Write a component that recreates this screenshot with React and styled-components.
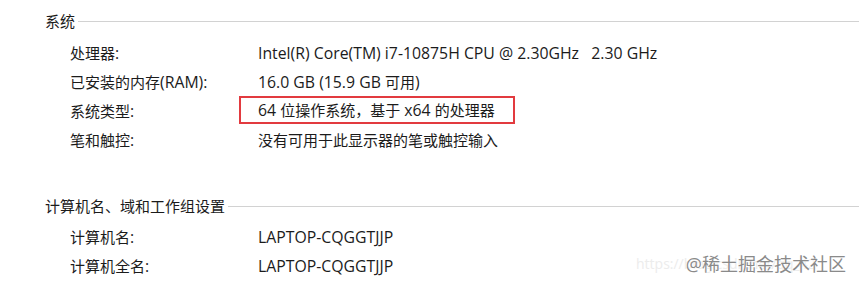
import styled, { createGlobalStyle } from 'styled-components';

const GlobalStyle = createGlobalStyle`
  html, body {
    margin: 0;
    padding: 0;
    background: #ffffff;
  }
  body {
    font-family: "Open Sans", "Noto Sans CJK SC", sans-serif;
    color: #1b1b1b;
  }
`;

const Page = styled.div`
  position: relative;
  width: 859px;
  height: 288px;
  overflow: hidden;
  background: #fff;
  padding-top: 7px;
  box-sizing: border-box;
`;

const Section = styled.section`
  display: flex;
  flex-direction: column;
  margin-bottom: ${(p) => p.$gap || 0}px;
`;

const SectionHeader = styled.div`
  display: flex;
  align-items: center;
  height: 26px;
  padding-left: 45px;
  margin-bottom: ${(p) => p.$after || 5}px;
  font-size: 15px;

  span {
    white-space: nowrap;
  }

  &::after {
    content: '';
    flex: 1;
    height: 1px;
    margin-left: 3px;
    margin-top: 3px;
    background: #d2d2d2;
  }
`;

const Row = styled.div`
  display: grid;
  grid-template-columns: 188px 1fr;
  align-items: center;
  height: 29px;
  padding-left: 70px;
  font-size: 15.8px;
  white-space: pre;
`;

const Cjk = styled.span`
  font-size: 15px;
`;

const Value = styled.span`
  justify-self: start;
  ${(p) =>
    p.$marked &&
    `
    margin-left: -19px;
    margin-top: -1px;
    padding: 0 18px 0 17px;
    height: 24px;
    line-height: 24px;
    border: 2px solid #e23a3f;
  `}
`;

const Watermark = styled.div`
  position: absolute;
  right: 13px;
  bottom: 12px;
  display: flex;
  align-items: center;
  font-size: 18px;
  color: #8a8a8a;
  text-shadow: 0 0 1px #fff, 0 0 2px #fff;

  small {
    position: absolute;
    right: 0;
    width: 210px;
    font-size: 14px;
    color: #ececec;
    text-shadow: none;
    white-space: nowrap;
    overflow: hidden;
  }

  b {
    position: relative;
    font-weight: normal;
  }
`;

// CJK glyphs run a touch smaller than the Latin ones in the original dialog
function Mixed({ text }) {
  return text
    .split(/([\u3000-\u9fff\uff00-\uffef]+)/)
    .filter(Boolean)
    .map((part, i) =>
      /[\u3000-\u9fff\uff00-\uffef]/.test(part) ? <Cjk key={i}>{part}</Cjk> : part
    );
}

const system = [
  ['处理器:', 'Intel(R) Core(TM) i7-10875H CPU @ 2.30GHz   2.30 GHz'],
  ['已安装的内存(RAM):', '16.0 GB (15.9 GB 可用)'],
  ['系统类型:', '64 位操作系统，基于 x64 的处理器', true],
  ['笔和触控:', '没有可用于此显示器的笔或触控输入'],
];

const computer = [
  ['计算机名:', 'LAPTOP-CQGGTJJP'],
  ['计算机全名:', 'LAPTOP-CQGGTJJP'],
];

export default function App() {
  return (
    <>
      <GlobalStyle />
      <Page>
        <Section $gap={38}>
          <SectionHeader>
            <span>系统</span>
          </SectionHeader>
          {system.map(([label, value, marked]) => (
            <Row key={label}>
              <span>
                <Mixed text={label} />
              </span>
              <Value $marked={marked}>
                <Mixed text={value} />
              </Value>
            </Row>
          ))}
        </Section>
        <Section>
          <SectionHeader $after={4}>
            <span>计算机名、域和工作组设置</span>
          </SectionHeader>
          {computer.map(([label, value]) => (
            <Row key={label}>
              <span>
                <Mixed text={label} />
              </span>
              <Value>
                <Mixed text={value} />
              </Value>
            </Row>
          ))}
        </Section>
        <Watermark>
          <small>https://blog.csdn.net/qq_42</small>
          <b>@稀土掘金技术社区</b>
        </Watermark>
      </Page>
    </>
  );
}
